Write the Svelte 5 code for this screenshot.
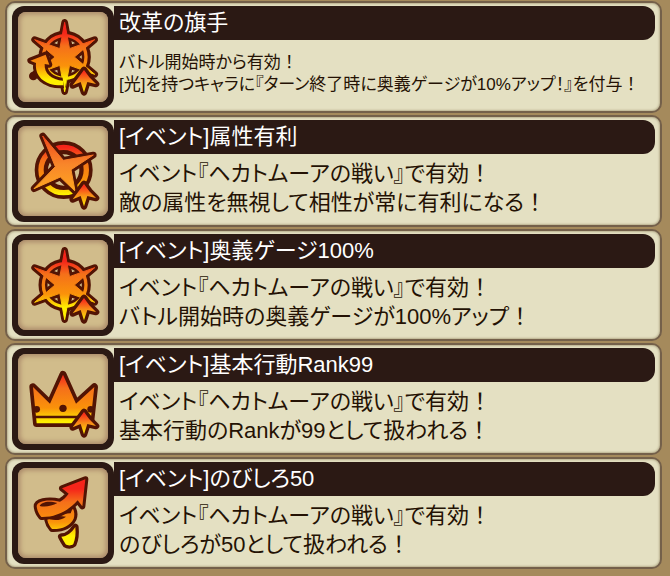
<script lang="ts">
  /**
   * Ability list
   *
   * One panel per ability: framed icon, title bar and effect text.
   */
  type Icon = 'reform' | 'compass' | 'wheel' | 'crown' | 'spiral'

  interface Ability {
    icon: Icon
    title: string
    lines: string[]
    small?: boolean
  }

  const abilities: Ability[] = [
    {
      icon: 'reform',
      title: '改革の旗手',
      lines: [
        'バトル開始時から有効！',
        '[光]を持つキャラに『ターン終了時に奥義ゲージが10%アップ！』を付与！'
      ],
      small: true
    },
    {
      icon: 'compass',
      title: '[イベント]属性有利',
      lines: ['イベント『ヘカトムーアの戦い』で有効！', '敵の属性を無視して相性が常に有利になる！']
    },
    {
      icon: 'wheel',
      title: '[イベント]奥義ゲージ100%',
      lines: ['イベント『ヘカトムーアの戦い』で有効！', 'バトル開始時の奥義ゲージが100%アップ！']
    },
    {
      icon: 'crown',
      title: '[イベント]基本行動Rank99',
      lines: ['イベント『ヘカトムーアの戦い』で有効！', '基本行動のRankが99として扱われる！']
    },
    {
      icon: 'spiral',
      title: '[イベント]のびしろ50',
      lines: ['イベント『ヘカトムーアの戦い』で有効！', 'のびしろが50として扱われる！']
    }
  ]

  // Six-pointed star around the wheel's hub
  function starPoints(cx: number, cy: number, outer: number, inner: number): string {
    const points: string[] = []
    for (let i = 0; i < 12; i++) {
      const r = i % 2 === 0 ? outer : inner
      const a = (i * 30 - 90) * (Math.PI / 180)
      points.push(`${(cx + r * Math.cos(a)).toFixed(1)},${(cy + r * Math.sin(a)).toFixed(1)}`)
    }
    return points.join(' ')
  }

  const wheelStar = starPoints(140, 135, 104, 29)
  const compassStar =
    'M74 30 L136 103 L226 87 L159 131 L171 195 L127 153 L48 188 L112 122 Z'
</script>

{#snippet wheel(fill: string)}
  <circle class="edge" cx="140" cy="135" r="65" stroke-width="27" />
  <polygon class="edge" points={wheelStar} stroke-width="20" />
  <circle cx="140" cy="135" r="64" fill="none" stroke={fill} stroke-width="10" />
  <polygon points={wheelStar} {fill} stroke={fill} stroke-width="3" />
{/snippet}

{#snippet upArrow(fill: string)}
  <path
    class="outlined"
    d="M198 174 L214 196 L234 216 L208 210 L198 241 L188 210 L164 220 L182 196 Z"
    {fill}
    stroke-width="20"
  />
{/snippet}

<main>
  {#each abilities as ability, i}
    {@const fill = `url(#flame-${i})`}
    {@const tip = `url(#tip-${i})`}
    {@const glow = `url(#glow-${i})`}
    <article class="panel">
      <div class="frame">
        <svg class="plate" viewBox="0 0 270 270" aria-hidden="true">
          <defs>
            <linearGradient id="flame-{i}" gradientUnits="userSpaceOnUse" x1="0" y1="45" x2="0" y2="225">
              <stop offset="0.1" stop-color="#f5251a" />
              <stop offset="0.32" stop-color="#f5701a" />
              <stop offset="0.65" stop-color="#fa920a" />
              <stop offset="0.88" stop-color="#fff000" />
            </linearGradient>
            <linearGradient id="glow-{i}" gradientUnits="userSpaceOnUse" x1="0" y1="30" x2="0" y2="200">
              <stop offset="0" stop-color="#f0481a" />
              <stop offset="0.5" stop-color="#f8862a" />
              <stop offset="1" stop-color="#ffa820" />
            </linearGradient>
            <linearGradient id="tip-{i}" gradientUnits="userSpaceOnUse" x1="0" y1="174" x2="0" y2="241">
              <stop offset="0.1" stop-color="#f8301a" />
              <stop offset="0.5" stop-color="#f88c18" />
              <stop offset="1" stop-color="#fff000" />
            </linearGradient>
          </defs>

          {#if ability.icon === 'reform' || ability.icon === 'wheel'}
            {@render wheel(fill)}
          {/if}

          {#if ability.icon === 'reform'}
            <!-- Arrow that turns up round the left side -->
            <circle class="ink" cx="46" cy="192" r="13" />
            <path
              class="outlined"
              d="M83 128 L37 146 L54 153 C50 192 78 222 136 220 L136 206 C100 204 78 184 80 156 L94 158 Z"
              {fill}
              stroke-width="18"
            />
            <path d="M133 192 L147 192 L140 240 Z" {fill} />
          {:else if ability.icon === 'compass'}
            <circle class="edge" cx="137" cy="132" r="67" stroke-width="40" />
            <circle cx="137" cy="132" r="68" fill="none" stroke={fill} stroke-width="16" />
            <path class="edge" d={compassStar} stroke-width="20" />
            <path d={compassStar} fill={glow} stroke={glow} stroke-width="3" />
          {:else if ability.icon === 'crown'}
            <path
              class="outlined"
              d="M45 99 L96 149 L135 62 L174 149 L229 99 L217 208 L56 208 Z"
              {fill}
              stroke-width="22"
            />
            <path class="edge" d="M53 189 H218" stroke-width="7" />
            <circle class="ink" cx="135" cy="163" r="11" />
            <circle class="ink" cx="56" cy="166" r="10" />
            <circle class="ink" cx="218" cy="166" r="10" />
          {:else if ability.icon === 'spiral'}
            <!-- Bands from the bottom coil up to the arrowhead -->
            <path
              class="outlined"
              d="M130 206 C146 206 161 194 172 177 C174 198 172 214 166 228 C160 234 148 233 143 229 C138 221 134 214 130 206 Z"
              {fill}
              stroke-width="20"
            />
            <path
              class="outlined"
              d="M88 156 C90 142 112 135 134 137 L158 136 L164 120 C170 130 170 144 167 152 C156 174 132 184 102 183 C96 176 90 168 88 156 Z"
              {fill}
              stroke-width="18"
            />
            <path class="ink" d="M96 154 C100 145 118 141 144 146 C132 155 114 159 96 154 Z" />
            <path
              class="outlined"
              d="M202 34 L132 61 L152 77 C144 88 136 95 126 101 C84 92 56 102 56 115 C57 126 62 138 70 147 C114 148 152 128 179 97 L193 115 Z"
              {fill}
              stroke-width="18"
            />
            <path class="ink" d="M65 114 C70 102 92 97 118 105 C102 114 82 118 65 114 Z" />
          {/if}

          {#if ability.icon !== 'spiral'}
            {@render upArrow(tip)}
          {/if}
        </svg>
      </div>
      <div class="content">
        <h2>{ability.title}</h2>
        <div class="effect" class:small={ability.small}>
          {#each ability.lines as line}
            <p>{line.slice(0, -1)}<span class="mark">{line.slice(-1)}</span></p>
          {/each}
        </div>
      </div>
    </article>
  {/each}
</main>

<style>
  :global(body) {
    margin: 0;
    background: #a58a5c;
  }

  main {
    display: flex;
    flex-direction: column;
    gap: 2px;
    padding: 1px 8px 5px 5px;
    font-family: 'Liberation Sans', 'Noto Sans CJK JP', sans-serif;
    font-feature-settings: 'palt';
  }

  .panel {
    display: flex;
    box-sizing: border-box;
    min-height: 112px;
    padding: 3px 5px 3px 5px;
    border: 2px solid #74604a;
    border-radius: 10px;
    background: #e4e0c2;
    box-shadow: inset 0 0 2px 1px #b9b08e;
  }

  .frame {
    flex: none;
    box-sizing: border-box;
    width: 102px;
    height: 102px;
    padding: 6px;
    border-radius: 12px;
    background: #2b1914;
  }

  .plate {
    display: block;
    width: 90px;
    height: 90px;
    border-radius: 8px;
    background: #d1bc8b;
    box-shadow: inset 0 0 5px 2px #a98768;
  }

  .edge {
    fill: none;
    stroke: #521404;
    stroke-linecap: round;
    stroke-linejoin: round;
  }

  .outlined {
    stroke: #521404;
    stroke-linejoin: round;
    paint-order: stroke;
  }

  .ink {
    fill: #521404;
  }

  .content {
    display: flex;
    flex: 1;
    flex-direction: column;
    min-width: 0;
  }

  h2 {
    margin: 0;
    padding-left: 5px;
    border-radius: 0 12px 12px 0;
    background: #2b1914;
    color: #fff;
    font-size: 22px;
    font-weight: 400;
    line-height: 34px;
  }

  .effect {
    display: flex;
    flex: 1;
    flex-direction: column;
    justify-content: center;
    padding-left: 5px;
    color: #241204;
    font-size: 22px;
    line-height: 29px;
  }

  .effect.small {
    font-size: 17px;
    line-height: 22px;
  }

  p {
    margin: 0;
  }

  /* The closing mark keeps its full width */
  .mark {
    font-feature-settings: normal;
  }
</style>
